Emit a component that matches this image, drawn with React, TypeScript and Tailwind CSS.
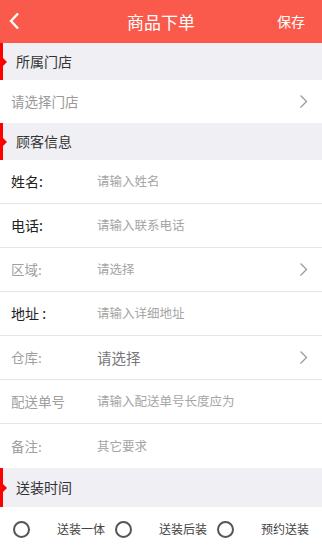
import React from "react";

const font = { fontFamily: '"Noto Sans CJK SC", "Noto Sans", sans-serif' };

function Chevron() {
  return (
    <svg width="9" height="15" viewBox="0 0 9 15" className="shrink-0">
      <polyline points="1.5,1.5 7.5,7.5 1.5,13.5" fill="none" stroke="#9a9a9a" strokeWidth="1.3" />
    </svg>
  );
}

function Section({ title, h = "h-[37px]" }: { title: string; h?: string }) {
  return (
    <div className={`relative flex items-center bg-[#efeff4] ${h}`}>
      <div className="absolute left-0 top-0 h-full w-[3px] bg-[#ff0000]" />
      <div className="absolute left-[3px] top-1/2 -translate-y-1/2 h-0 w-0 border-y-[4px] border-y-transparent border-l-[4px] border-l-[#ff0000]" />
      <span className="pl-[16px] text-[14px] text-[#333333]">{title}</span>
    </div>
  );
}

function Row({
  label,
  value,
  dark,
  valueBig,
  arrow,
  border = true,
}: {
  label: string;
  value: string;
  dark?: boolean;
  valueBig?: boolean;
  arrow?: boolean;
  border?: boolean;
}) {
  return (
    <div className={`flex h-[44px] items-center bg-white pl-[11px] pr-[14px] ${border ? "border-b border-[#e6e6e6]" : ""}`}>
      <span className={`w-[86px] shrink-0 ${dark ? "text-[14px] text-[#222222]" : "text-[13.5px] text-[#a0a0a0]"}`}>{label}</span>
      <span className={`flex-1 ${valueBig ? "text-[14.5px] text-[#777777]" : "text-[12.5px] text-[#a5a5a5]"}`}>{value}</span>
      {arrow && <Chevron />}
    </div>
  );
}

function Radio({ label }: { label: string }) {
  return (
    <div className="flex w-[102px] items-center">
      <div className="h-[17px] w-[17px] rounded-full border-2 border-[#555555]" />
      <span className="ml-[27px] text-[12px] text-[#444444]">{label}</span>
    </div>
  );
}

export default function App() {
  return (
    <div className="w-[322px] h-[550px] overflow-hidden bg-white" style={font}>
      <div className="relative flex h-[43px] items-center justify-center bg-[#fa5a4b]">
        <svg width="12" height="18" viewBox="0 0 12 18" className="absolute left-[9px] top-[12px]">
          <polyline points="9,1.5 2,9 9,16.5" fill="none" stroke="#ffffff" strokeWidth="2.4" />
        </svg>
        <span className="text-[17px] text-white">商品下单</span>
        <span className="absolute right-[17px] text-[14px] text-white">保存</span>
      </div>
      <Section title="所属门店" />
      <div className="flex h-[43px] items-center bg-white pl-[11px] pr-[14px]">
        <span className="flex-1 text-[13.5px] text-[#999999]">请选择门店</span>
        <Chevron />
      </div>
      <Section title="顾客信息" />
      <Row label="姓名:" value="请输入姓名" dark />
      <Row label="电话:" value="请输入联系电话" dark />
      <Row label="区域:" value="请选择" arrow />
      <Row label="地址 :" value="请输入详细地址" dark />
      <Row label="仓库:" value="请选择" valueBig arrow />
      <Row label="配送单号" value="请输入配送单号长度应为" />
      <Row label="备注:" value="其它要求" border={false} />
      <Section title="送装时间" h="h-[39px]" />
      <div className="flex h-[44px] items-center pl-[13px]">
        <Radio label="送装一体" />
        <Radio label="送装后装" />
        <Radio label="预约送装" />
      </div>
    </div>
  );
}
